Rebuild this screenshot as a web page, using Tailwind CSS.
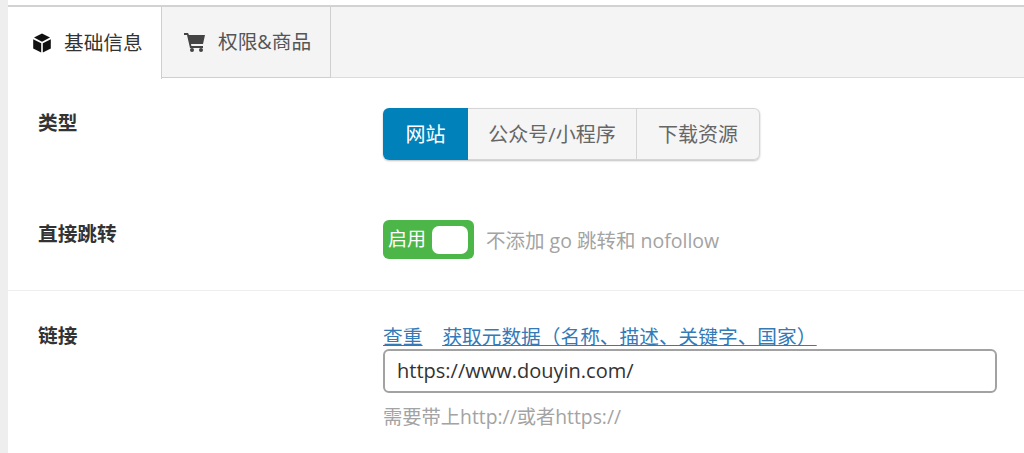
<!DOCTYPE html>
<html lang="zh-CN">
  <head>
    <meta charset="UTF-8" />
    <title>基础信息</title>
    <script src="https://cdn.jsdelivr.net/npm/@tailwindcss/browser@4"></script>
  </head>
  <body class="bg-[#eeeeee] font-['Open_Sans','Noto_Sans_CJK_SC',sans-serif] overflow-hidden h-[453px]">
    <div class="ml-[8px] bg-white h-[453px]">
      <div class="h-[5px]"></div>
      <!-- Tabs -->
      <div class="flex h-[73px] border-t-2 border-[#d2d2d2] bg-[#f4f4f4]">
        <div class="w-[154px] bg-white border-r border-[#cfcfcf] flex items-center pl-[24px] gap-[12px] text-[19.7px] text-[#333] -mb-px">
          <svg class="w-[20px] h-[20px]" viewBox="0 0 20 20" fill="#111">
            <path d="M10 .5 18 4.6 10 8.7 2 4.6Z" />
            <path d="M1.2 6.2 9.2 10.3V19.5L1.2 15.4Z" />
            <path d="M18.8 6.2 10.8 10.3V19.5L18.8 15.4Z" />
          </svg>
          <span>基础信息</span>
        </div>
        <div class="w-[169px] border-r border-b border-[#cfcfcf] flex items-center pl-[22px] gap-[12px] text-[19.7px] text-[#555]">
          <svg class="w-[22px] h-[20px]" viewBox="0 0 22 20" fill="#444">
            <path d="M0 1h4l1 2h16l-2 9H7l.4 2H19v2H6L3 3H0Z" />
            <circle cx="8" cy="18" r="2" />
            <circle cx="17" cy="18" r="2" />
          </svg>
          <span>权限&amp;商品</span>
        </div>
        <div class="flex-1 border-b border-[#dcdcdc]"></div>
      </div>

      <!-- 类型 + 直接跳转 -->
      <div class="h-[213px] border-b border-[#eeeeee] pt-[30px]">
        <div class="flex h-[112px]">
          <div class="w-[375px] pl-[30px] text-[19.7px] font-semibold text-[#333] leading-[30px]">类型</div>
          <div class="flex h-[52px] text-[20px] shadow-[0_1px_2px_rgba(0,0,0,0.25)] rounded-[6px]">
            <div class="w-[85px] bg-[#0081ba] text-white flex items-center justify-center rounded-l-[6px] pt-[2px]">网站</div>
            <div class="w-[169px] bg-[#f5f5f5] text-[#666] border-y border-[#d5d5d5] border-r flex items-center justify-center pt-[2px]">公众号/小程序</div>
            <div class="w-[123px] bg-[#f5f5f5] text-[#666] border-y border-r border-[#d5d5d5] flex items-center justify-center rounded-r-[6px] pt-[2px]">下载资源</div>
          </div>
        </div>
        <div class="flex">
          <div class="w-[375px] pl-[30px] text-[19.7px] font-semibold text-[#333] leading-[30px] -mt-px">直接跳转</div>
          <div class="flex items-center h-[39px]">
            <div class="w-[91px] h-[39px] bg-[#4cb648] rounded-[6px] flex items-center pl-[5px] text-white text-[19px]">
              <span>启用</span>
              <span class="ml-[6px] w-[36px] h-[28px] bg-white rounded-[7px]"></span>
            </div>
            <span class="ml-[12px] pt-[3px] text-[19.5px] text-[#a3a3a3]">不添加 go 跳转和 nofollow</span>
          </div>
        </div>
      </div>

      <!-- 链接 -->
      <div class="flex pt-[30px]">
        <div class="w-[375px] pl-[30px] text-[19.7px] font-semibold text-[#333] leading-[30px]">链接</div>
        <div class="w-[614px]">
          <div class="flex gap-[20px] text-[19.7px] leading-[26px] pt-[3px] -mb-[1px] text-[#337ab7] underline">
            <a>查重</a>
            <a>获取元数据（名称、描述、关键字、国家）</a>
          </div>
          <div class="h-[44px] border-2 border-[#a2a2a2] rounded-[6px] flex items-center pl-[12px] text-[20px] text-[#333]">https://www.douyin.com/</div>
          <p class="mt-[10px] text-[19.3px] text-[#a3a3a3]">需要带上http://或者https://</p>
        </div>
      </div>
    </div>
  </body>
</html>
